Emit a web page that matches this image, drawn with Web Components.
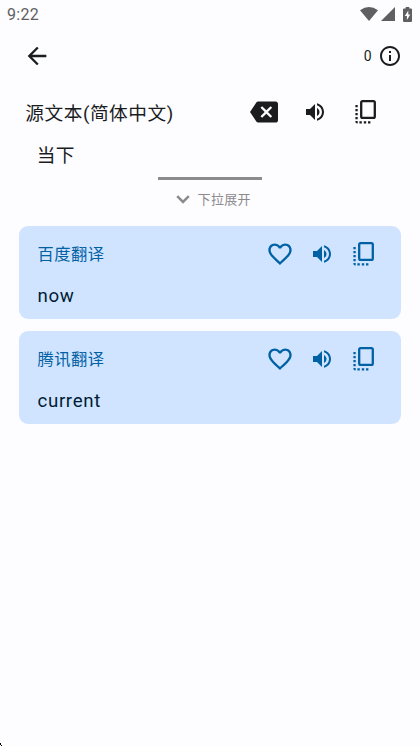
<!DOCTYPE html>
<html lang="zh-CN"><head><meta charset="utf-8"><title>翻译</title>
<style>
html,body{margin:0;height:100%;overflow:hidden;background:#fdfcff}
body{font-family:Roboto,"Noto Sans CJK SC",sans-serif;color:#1a1c1e}
</style></head><body>
<translate-app></translate-app>
<script>
const ICONS={
back:['0 0 24 24','<path d="M20 11H7.83l5.59-5.59L12 4l-8 8 8 8 1.41-1.41L7.83 13H20z"/>'],
info:['0 0 24 24','<path d="M11 7h2v2h-2zm0 4h2v6h-2zm1-9C6.48 2 2 6.48 2 12s4.48 10 10 10 10-4.48 10-10S17.52 2 12 2zm0 18c-4.41 0-8-3.59-8-8s3.59-8 8-8 8 3.59 8 8-3.59 8-8 8z"/>'],
clear:['0 0 24 24','<path d="M22 3H7c-.69 0-1.23.35-1.59.88L0 12l5.41 8.11c.36.53.9.89 1.59.89h15c1.1 0 2-.9 2-2V5c0-1.1-.9-2-2-2zm-3 12.59L17.59 17 14 13.41 10.41 17 9 15.59 12.59 12 9 8.41 10.41 7 14 10.59 17.59 7 19 8.41 15.41 12 19 15.59z"/>'],
sound:['0 0 24 24','<path d="M3 9v6h4l5 5V4L7 9H3zm13.5 3c0-1.77-1.02-3.29-2.5-4.03v8.05c1.48-.73 2.5-2.25 2.5-4.02zM14 3.23v2.06c2.89.86 5 3.54 5 6.71s-2.11 5.85-5 6.71v2.06c4.01-.91 7-4.49 7-8.77s-2.99-7.86-7-8.77z"/>'],
heart:['0 0 24 24','<path d="M16.5 3c-1.74 0-3.41.81-4.5 2.09C10.91 3.81 9.24 3 7.5 3 4.42 3 2 5.42 2 8.5c0 3.78 3.4 6.86 8.55 11.54L12 21.35l1.45-1.32C18.6 15.36 22 12.28 22 8.5 22 5.42 19.58 3 16.5 3zm-4.4 15.55l-.1.1-.1-.1C7.14 14.24 4 11.39 4 8.5 4 6.5 5.5 5 7.5 5c1.54 0 3.04.99 3.57 2.36h1.87C13.46 5.99 14.96 5 16.5 5c2 0 3.5 1.5 3.5 3.5 0 2.89-3.14 5.74-7.9 10.05z"/>'],
copy:['0 0 28 28','<rect x="9.2" y="3.2" width="13.6" height="16.6" rx="1.4" fill="none" stroke="currentColor" stroke-width="2.3"/><path d="M3.4 7h2.3v2.3H3.4zm0 4h2.3v2.3H3.4zm0 4h2.3v2.3H3.4zm0 4h2.3v2.3H3.4zm0 4h2.3v2.6h-.5q-1.8 0-1.8-1.8zM7.4 23.3h2.4v2.3H7.4zm4.4 0h2.4v2.3h-2.4zm4.2 0h2.4v2.3H16z"/>'],
down:['0 0 14 9','<path d="M1.2 1.2L7 7l5.8-5.8" fill="none" stroke="currentColor" stroke-width="2.5"/>'],
wifi:['0 0 18 14','<path d="M0 3.3Q9-3.3 18 3.3L9 14z"/>'],
signal:['0 0 14 14','<path d="M14 0v14H0z"/>'],
battery:['0 0 9 15','<path d="M2.7 0h3.6v1.5H8q1 0 1 1V14q0 1-1 1H1q-1 0-1-1V2.500q0-1 1-1h1.700z"/><path fill="#fdfcff" d="M5.300 3.600L1.800 9h2.100v4l3.400-5.600H5.300z"/>'],
corner:['0 0 3 4','<path d="M0 1h1v2H0zM1 3h1v1H1z"/>']};
const define=(name,css,html)=>customElements.define(name,class extends HTMLElement{
constructor(){super();this.attachShadow({mode:'open'}).innerHTML=`<style>:host{box-sizing:border-box}${css}</style>${html}`}});
customElements.define('app-icon',class extends HTMLElement{
constructor(){super();this.attachShadow({mode:'open'})}
connectedCallback(){const [box,art]=ICONS[this.getAttribute('name')];const w=this.getAttribute('w')||24,h=this.getAttribute('h')||w;
this.shadowRoot.innerHTML=`<style>:host{display:block;flex:none;width:${w}px;height:${h}px}svg{display:block;width:100%;height:100%;fill:currentColor}</style><svg viewBox="${box}">${art}</svg>`}});
define('status-bar',`:host{display:flex;height:28px;padding:0 8px 0 7px;align-items:center;color:#5f5f61;font-size:16px;letter-spacing:.3px}span{flex:1;line-height:28px;padding-top:2px}app-icon+app-icon{margin-left:3px}app-icon:last-child{margin-left:8.500px}`,
`<span>9:22</span><app-icon name="wifi" w="18" h="14"></app-icon><app-icon name="signal" w="14"></app-icon><app-icon name="battery" w="9" h="15"></app-icon>`);
define('app-bar',`:host{display:flex;height:56px;padding:0 18.300px 0 23.300px;align-items:center;justify-content:space-between}div{display:flex;align-items:center;gap:6px;font-size:14px}`,
`<app-icon name="back" w="28"></app-icon><div><span>0</span><app-icon name="info"></app-icon></div>`);
define('source-text',`:host{display:block;padding:0 39.800px 0 25.300px;height:93px}header{display:flex;height:56px;align-items:center}h1{margin:0;flex:1;padding-top:3px;font-size:18.700px;font-weight:400;letter-spacing:.53px;white-space:nowrap;line-height:28px}.actions{display:flex;align-items:center}.actions app-icon:nth-child(2){margin-left:25.500px}.actions app-icon:nth-child(3){margin-left:25px}p{margin:0 0 0 11.500px;padding-top:2px;font-size:18.700px;line-height:29px;letter-spacing:.3px}`,
`<header><h1><slot name="title"></slot></h1><div class="actions"><app-icon name="clear" w="28"></app-icon><app-icon name="sound"></app-icon><app-icon name="copy" w="28"></app-icon></div></header><p><slot></slot></p>`);
define('pull-expander',`:host{display:flex;flex-direction:column;align-items:center;height:49px;color:#8b8b8e}i{display:block;width:104px;height:2.500px;background:#8b8b8e}div{display:flex;align-items:center;gap:7.500px;margin-top:9px;margin-left:7px;font-size:13px;line-height:22px;letter-spacing:.35px}`,
`<i></i><div><app-icon name="down" w="14" h="9"></app-icon><span><slot></slot></span></div>`);
define('result-card',`:host{display:block;height:93px;padding:0 23.500px 0 18.500px;border-radius:9px;background:#d1e4ff;color:#001d36}header{display:flex;height:56px;align-items:center;color:#0061a4}h2{flex:1;margin:0;padding-top:2px;font-size:16.300px;font-weight:400;letter-spacing:.5px;line-height:26px}.actions{display:flex;align-items:center}.actions app-icon:nth-child(2){margin-left:16px}.actions app-icon:nth-child(3){margin-left:16px}p{margin:0;line-height:28px;font-size:18.700px;letter-spacing:.65px}`,
`<header><h2><slot name="title"></slot></h2><div class="actions"><app-icon name="heart" w="28"></app-icon><app-icon name="sound"></app-icon><app-icon name="copy" w="28"></app-icon></div></header><p><slot></slot></p>`);
define('translate-app',`:host{display:flex;flex-direction:column;height:746px;background:#fdfcff}main{display:flex;flex-direction:column;gap:12px;padding:0 19px;flex:1}.corner{color:#000}`,
`<status-bar></status-bar><app-bar></app-bar><source-text><span slot="title">源文本(简体中文)</span>当下</source-text><pull-expander>下拉展开</pull-expander><main><result-card><span slot="title">百度翻译</span>now</result-card><result-card><span slot="title">腾讯翻译</span>current</result-card></main><app-icon class="corner" name="corner" w="3" h="4"></app-icon>`);
</script></body></html>
